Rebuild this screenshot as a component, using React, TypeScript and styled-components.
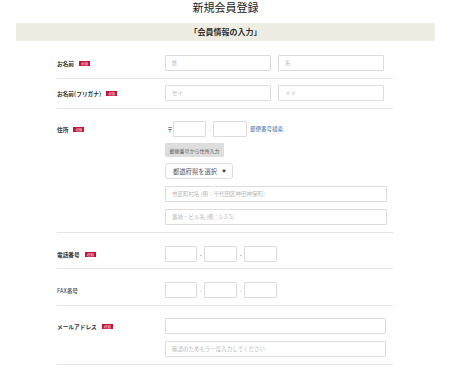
import styled, { createGlobalStyle } from "styled-components";

const GlobalStyle = createGlobalStyle`
  html, body {
    margin: 0;
    padding: 0;
    background: #fff;
  }
  body {
    font-family: "Noto Sans CJK JP", "Noto Sans", sans-serif;
    color: #333;
  }
  * {
    box-sizing: border-box;
  }
`;

export default function App() {
  return (
    <Page>
      <GlobalStyle />
      <Title>新規会員登録</Title>
      <SectionBar>「会員情報の入力」</SectionBar>

      <Form>
        {/* お名前 */}
        <Row $top={14}>
          <Label>
            お名前<Required>必須</Required>
          </Label>
          <Field>
            <Line>
              <TextInput $w={106} placeholder="姓" />
              <TextInput $w={106} placeholder="名" />
            </Line>
          </Field>
        </Row>

        <Row $top={6}>
          <Label>
            お名前(フリガナ)<Required>必須</Required>
          </Label>
          <Field>
            <Line>
              <TextInput $w={106} placeholder="セイ" />
              <TextInput $w={106} placeholder="メイ" />
            </Line>
          </Field>
        </Row>

        {/* 住所 */}
        <Row>
          <Label>
            住所<Required>必須</Required>
          </Label>
          <Field>
            <Line $gap={0}>
              <Mark>〒</Mark>
              <TextInput $w={33} />
              <Dash $light>-</Dash>
              <TextInput $w={34} />
              <SearchLink href="#">郵便番号検索</SearchLink>
            </Line>
            <ZipButton type="button">郵便番号から住所入力</ZipButton>
            <SelectBox>
              <Select defaultValue="">
                <option value="">都道府県を選択</option>
              </Select>
              <Arrow>▼</Arrow>
            </SelectBox>
            <TextInput $w={222} placeholder="市区町村名 (例：千代田区神田神保町)" />
            <TextInput $w={222} placeholder="番地・ビル名 (例：1-3-5)" />
          </Field>
        </Row>

        {/* 電話番号 */}
        <Row $top={13} $bottom={6}>
          <Label>
            電話番号<Required>必須</Required>
          </Label>
          <Field>
            <Line $gap={0}>
              <TextInput $w={32} />
              <Dash>-</Dash>
              <TextInput $w={33} />
              <Dash>-</Dash>
              <TextInput $w={33} />
            </Line>
          </Field>
        </Row>

        <Row $top={13}>
          <Label $regular>FAX番号</Label>
          <Field>
            <Line $gap={0}>
              <TextInput $w={32} />
              <Dash $light>-</Dash>
              <TextInput $w={33} />
              <Dash $light>-</Dash>
              <TextInput $w={33} />
            </Line>
          </Field>
        </Row>

        <Row>
          <Label>
            メールアドレス<Required>必須</Required>
          </Label>
          <Field>
            <TextInput $w={221} />
            <TextInput $w={221} placeholder="確認のためもう一度入力してください" />
          </Field>
        </Row>
      </Form>
    </Page>
  );
}

const Page = styled.div`
  width: 451px;
`;

const Title = styled.h1`
  margin: 0;
  height: 16px;
  font-size: 11px;
  line-height: 15px;
  font-weight: 400;
  text-align: center;
  color: #222;
`;

const SectionBar = styled.div`
  margin: 7px 16px 0;
  height: 18px;
  background: #eeede3;
  font-size: 8px;
  font-weight: 700;
  line-height: 18px;
  text-align: center;
  color: #333;
`;

const Form = styled.div`
  margin-left: 57px;
  width: 336px;
`;

const Row = styled.div<{ $top?: number; $bottom?: number }>`
  display: flex;
  align-items: flex-start;
  padding: ${(p) => p.$top ?? 12}px 0 ${(p) => p.$bottom ?? 7}px;
  border-bottom: 1px solid #e4e4e4;
`;

const Label = styled.div<{ $regular?: boolean }>`
  width: 108px;
  flex-shrink: 0;
  display: flex;
  align-items: center;
  height: 16px;
  font-size: 5.7px;
  font-weight: ${(p) => (p.$regular ? 400 : 700)};
  color: #333;
`;

const Required = styled.span`
  display: inline-block;
  margin-left: 5px;
  padding: 0 2px;
  height: 5px;
  background: #c4123a;
  color: #fff;
  font-size: 3.5px;
  font-weight: 400;
  line-height: 5px;
`;

const Field = styled.div`
  flex: 1;
  display: flex;
  flex-direction: column;
  align-items: flex-start;
  gap: 7px;
`;

const Line = styled.div<{ $gap?: number }>`
  display: flex;
  align-items: center;
  gap: ${(p) => p.$gap ?? 7}px;
`;

const TextInput = styled.input<{ $w: number }>`
  width: ${(p) => p.$w}px;
  height: 16px;
  margin: 0;
  padding: 0 6px;
  border: 1px solid #dcdcdc;
  border-radius: 1px;
  background: #fff;
  font-family: inherit;
  font-size: 5.5px;
  color: #333;
  outline: none;

  &::placeholder {
    color: #b8b8b8;
  }
`;

const Mark = styled.span`
  width: 8px;
  font-size: 6px;
  color: #333;
  padding-left: 2px;
`;

const Dash = styled.span<{ $light?: boolean }>`
  width: 7px;
  text-align: center;
  font-size: 6px;
  color: ${(p) => (p.$light ? "#aaa" : "#555")};
`;

const SearchLink = styled.a`
  margin-left: 3px;
  font-size: 5.5px;
  color: #3d6fa8;
  text-decoration: none;
`;

const ZipButton = styled.button`
  margin: -1px 0;
  width: 59px;
  height: 14px;
  padding: 0;
  border: none;
  border-radius: 1px;
  background: #dedede;
  font-family: inherit;
  font-size: 5px;
  color: #555;
`;

const SelectBox = styled.div`
  display: flex;
  align-items: center;
  width: 68px;
  height: 16px;
  border: 1px solid #dcdcdc;
  border-radius: 3px;
  background: #fff;
`;

const Select = styled.select`
  appearance: none;
  flex: 1;
  height: 100%;
  padding: 0 0 0 7px;
  border: none;
  background: transparent;
  font-family: inherit;
  font-size: 6.3px;
  color: #555;
  outline: none;
`;

const Arrow = styled.span`
  width: 10px;
  font-size: 4px;
  color: #333;
`;
